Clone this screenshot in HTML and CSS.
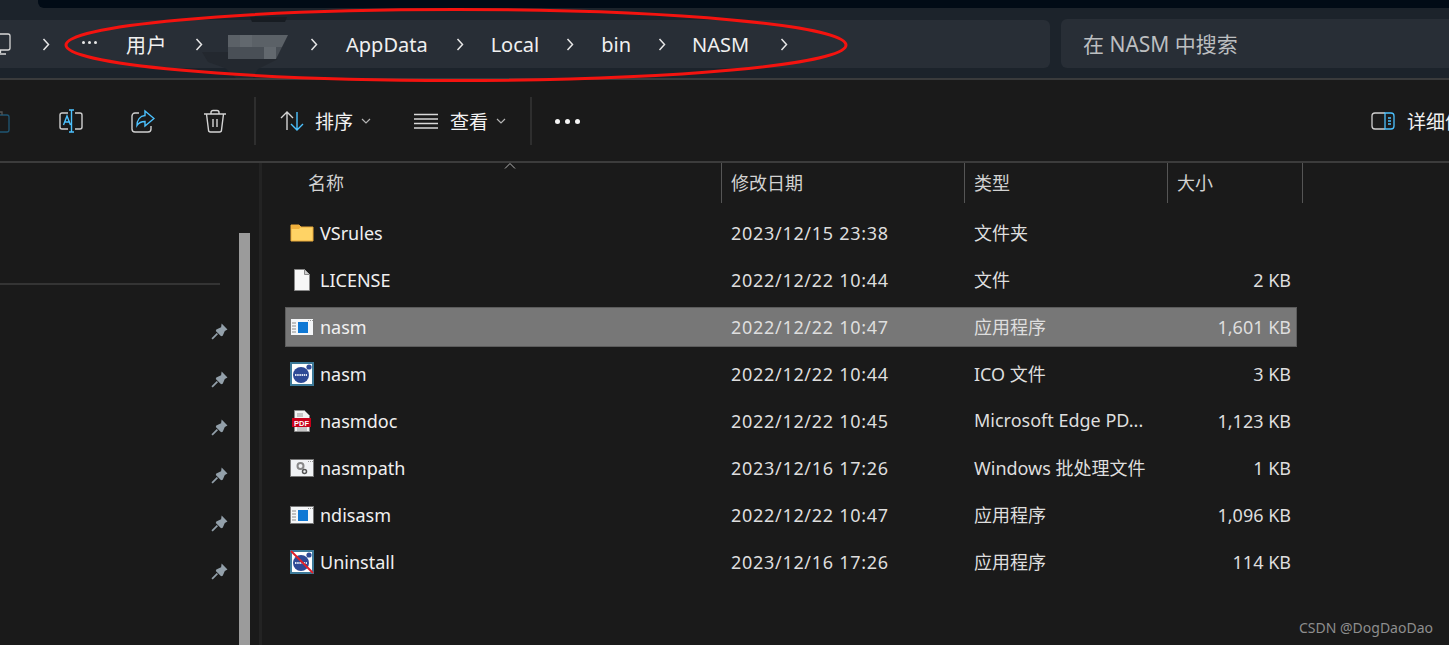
FILE: index.html
```html
<!DOCTYPE html>
<html lang="zh-CN">
<head>
    <meta charset="UTF-8">
    <title>NASM</title>
    <link rel="stylesheet" href="styles.css">
</head>
<body>
<svg class="defs" width="0" height="0">
    <symbol id="exe" viewBox="0 0 24 18">
        <rect x="0.5" y="0.5" width="23" height="17" fill="#f4f6f8" stroke="#777"/>
        <path d="M2 5h4M2 8h4M2 11h4M2 14h4" stroke="#8a8a8a"/>
        <path d="M18 2.5h1M20 2.5h1M22 2.5h1" stroke="#999"/>
        <rect x="8" y="4" width="10" height="11" fill="#0f78d4"/>
    </symbol>
    <symbol id="logo" viewBox="0 0 24 24">
        <rect x="1" y="1" width="22" height="22" fill="#fff" stroke="#3d7a99" stroke-width="2"/>
        <circle cx="11" cy="13" r="8" fill="#2f4a96"/>
        <circle cx="19" cy="5" r="2.6" fill="#2f4a96"/>
        <path d="M5 13h12" stroke="#dfe4f2" stroke-width="2" stroke-dasharray="1.5 0.7"/>
    </symbol>
    <symbol id="chevron" viewBox="0 0 8 13">
        <path d="M1.500 1l5 5.500-5 5.500" fill="none" stroke="#e6e6e6" stroke-width="1.500"/>
    </symbol>
    <symbol id="pushpin" viewBox="0 0 16 16">
        <path d="M10 0.500l5.500 5.500-2.500 1.500-2 4.500-1.500 0.500-5-5 0.500-1.500 4.500-2z" fill="#93a0aa"/>
        <path d="M6 10l-5 5" stroke="#93a0aa" stroke-width="1.600"/>
    </symbol>
</svg>

<div class="window">
    <div class="titlebar"><div class="titlebar-tab"></div></div>

    <div class="addressrow">
        <div class="crumbs">
            <svg class="pc-icon" width="22" height="24" viewBox="0 0 22 24" fill="none" stroke="#d8d8d8" stroke-width="1.3">
                <rect x="1" y="2" width="19" height="16" rx="2"/>
                <path d="M10.500 18v3M5 22h11"/>
            </svg>
            <svg class="chev first-chev" width="8" height="13"><use href="#chevron"/></svg>
            <div class="crumb-more"><i></i><i></i><i></i></div>
            <span class="crumb crumb-cjk">用户</span>
            <svg class="chev" width="8" height="13"><use href="#chevron"/></svg>
            <svg class="blurred" width="60" height="24" viewBox="0 0 60 24">
                <path d="M-26 17h26v7h50l-20 10-5 9h-17l-11-10-17-6z" fill="#23282f"/>
                <path d="M22-18h37l-2 5h-33z" fill="#171c22"/>
                <path d="M0 0h60l-6 12h-54z" fill="#5b6167"/>
                <path d="M0 12h54l-6 12h-48z" fill="#494f56"/>
                <path d="M12 0h12v12h-12zM36 12h12v12h-12z" fill="#62686e"/>
            </svg>
            <svg class="chev chev-after-blur" width="8" height="13"><use href="#chevron"/></svg>
            <span class="crumb">AppData</span>
            <svg class="chev" width="8" height="13"><use href="#chevron"/></svg>
            <span class="crumb">Local</span>
            <svg class="chev chev-local" width="8" height="13"><use href="#chevron"/></svg>
            <span class="crumb">bin</span>
            <svg class="chev chev-bin" width="8" height="13"><use href="#chevron"/></svg>
            <span class="crumb">NASM</span>
            <svg class="chev chev-last" width="8" height="13"><use href="#chevron"/></svg>
        </div>
        <div class="search">在 NASM 中搜索</div>
    </div>

    <div class="toolbar">
        <svg class="tool tool-paste" width="24" height="24" viewBox="0 0 24 24" fill="none" stroke-width="1.300">
            <rect x="1" y="6" width="22" height="17" rx="2" stroke="#1f5673"/>
            <path d="M8 6V3h8v3" stroke="#555"/>
        </svg>
        <svg class="tool" width="24" height="24" viewBox="0 0 24 24" fill="none" stroke-width="1.400">
            <path d="M9 4H3a2 2 0 0 0-2 2v12a2 2 0 0 0 2 2h6M16 4h5a2 2 0 0 1 2 2v12a2 2 0 0 1-2 2h-5" stroke="#cfcfcf"/>
            <path d="M12.500 1v22M10 1h5M10 23h5M4.500 16l3.500-9 3.500 9M6 13h5" stroke="#4cc2ff"/>
        </svg>
        <svg class="tool" width="24" height="24" viewBox="0 0 24 24" fill="none" stroke-width="1.400">
            <path d="M8 4H4a3 3 0 0 0-3 3v13a3 3 0 0 0 3 3h13a3 3 0 0 0 3-3v-3" stroke="#cfcfcf"/>
            <path d="M14 2l9 7.500-9 7.500v-4.500c-4 0-6.500 1.500-8 4 0-5.500 3-9.500 8-10z" stroke="#4cc2ff"/>
        </svg>
        <svg class="tool" width="24" height="24" viewBox="0 0 24 24" fill="none" stroke="#d4d4d4" stroke-width="1.400">
            <path d="M1 5h22M8 5V3.500a2 2 0 0 1 2-2h4a2 2 0 0 1 2 2V5M3.500 5l2 16a2 2 0 0 0 2 2h9a2 2 0 0 0 2-2l2-16M10 10v8M14 10v8"/>
        </svg>
        <div class="tool-sep"></div>
        <svg class="sort-icon" width="24" height="20" viewBox="0 0 24 20" fill="none" stroke-width="1.400">
            <path d="M7 19V1M1 7l6-6 6 6" stroke="#d4d4d4"/>
            <path d="M17 1v18M11 13l6 6 6-6" stroke="#4cc2ff"/>
        </svg>
        <span class="tool-label">排序</span>
        <svg class="caret" width="10" height="6" viewBox="0 0 10 6"><path d="M1 1l4 4 4-4" fill="none" stroke="#b4b4b4" stroke-width="1.200"/></svg>
        <svg class="view-icon" width="24" height="16" viewBox="0 0 24 16" fill="none" stroke="#d8d8d8" stroke-width="1.300">
            <path d="M0 1.500h24M0 6h24M0 10.500h24M0 15h24"/>
        </svg>
        <span class="tool-label">查看</span>
        <svg class="caret" width="10" height="6" viewBox="0 0 10 6"><path d="M1 1l4 4 4-4" fill="none" stroke="#b4b4b4" stroke-width="1.200"/></svg>
        <div class="tool-sep sep-second"></div>
        <div class="dots"><i></i><i></i><i></i></div>
        <svg class="detail-icon" width="24" height="18" viewBox="0 0 24 18" fill="none" stroke-width="1.300">
            <path d="M14 1H4a3 3 0 0 0-3 3v10a3 3 0 0 0 3 3h10" stroke="#cfcfcf"/>
            <path d="M14 1h6a3 3 0 0 1 3 3v10a3 3 0 0 1-3 3h-6zM17 6h3M17 9h3M17 12h3" stroke="#4cc2ff"/>
        </svg>
        <span class="tool-label">详细信息</span>
    </div>

    <div class="body">
        <aside class="sidebar">
            <div class="nav">
                <div class="nav-line"></div>
                <div class="pins">
                    <svg class="pin" width="17" height="17"><use href="#pushpin"/></svg>
                    <svg class="pin" width="17" height="17"><use href="#pushpin"/></svg>
                    <svg class="pin" width="17" height="17"><use href="#pushpin"/></svg>
                    <svg class="pin" width="17" height="17"><use href="#pushpin"/></svg>
                    <svg class="pin" width="17" height="17"><use href="#pushpin"/></svg>
                    <svg class="pin" width="17" height="17"><use href="#pushpin"/></svg>
                </div>
            </div>
            <div class="scrollbar"></div>
        </aside>

        <main class="list">
            <div class="list-head">
                <div class="col col-name">名称<svg class="sort-caret" width="12" height="6" viewBox="0 0 12 6"><path d="M1 5.500l5-5 5 5" fill="none" stroke="#b0b0b0"/></svg></div>
                <div class="col">修改日期</div>
                <div class="col">类型</div>
                <div class="col">大小</div>
            </div>

            <div class="row">
                <div class="cell-name">
                    <svg class="file-icon" width="24" height="18" viewBox="0 0 24 18"><path d="M1 1h8l2 2h12v14H1z" fill="#ffd365" stroke="#e8a93a"/><path d="M1 1h8l2 2-2 2H1z" fill="#f0b03c"/></svg>
                    VSrules
                </div>
                <div class="date">2023/12/15 23:38</div><div class="type">文件夹</div><div class="size"></div>
            </div>
            <div class="row">
                <div class="cell-name">
                    <svg class="file-icon" width="24" height="22" viewBox="0 0 24 22"><path d="M4.500 0.500h10l5 5v16h-15z" fill="#f7f7f7" stroke="#888"/><path d="M14.500 0.500v5h5" fill="#ccc" stroke="#888"/></svg>
                    LICENSE
                </div>
                <div class="date">2022/12/22 10:44</div><div class="type">文件</div><div class="size">2 KB</div>
            </div>
            <div class="row row-selected">
                <div class="cell-name"><svg class="file-icon" width="24" height="18"><use href="#exe"/></svg>nasm</div>
                <div class="date">2022/12/22 10:47</div><div class="type">应用程序</div><div class="size">1,601 KB</div>
            </div>
            <div class="row">
                <div class="cell-name"><svg class="file-icon" width="24" height="24"><use href="#logo"/></svg>nasm</div>
                <div class="date">2022/12/22 10:44</div><div class="type">ICO 文件</div><div class="size">3 KB</div>
            </div>
            <div class="row">
                <div class="cell-name">
                    <svg class="file-icon" width="24" height="22" viewBox="0 0 24 22">
                        <path d="M4.500 0.500h10l5 5v16h-15z" fill="#f2f2f2" stroke="#888"/>
                        <path d="M7 4h6M7 6h6M7 18h10M7 20h10" stroke="#999"/>
                        <rect x="2" y="8" width="19" height="9" fill="#c8001a"/>
                        <text x="11.500" y="15.500" class="pdf-text">PDF</text>
                    </svg>
                    nasmdoc
                </div>
                <div class="date">2022/12/22 10:45</div><div class="type">Microsoft Edge PD...</div><div class="size">1,123 KB</div>
            </div>
            <div class="row">
                <div class="cell-name">
                    <svg class="file-icon" width="24" height="18" viewBox="0 0 24 18">
                        <rect x="0.500" y="0.500" width="23" height="17" fill="#f0f2f4" stroke="#777"/>
                        <path d="M18 2.500h1M20 2.500h1M22 2.500h1" stroke="#999"/>
                        <circle cx="10.500" cy="7" r="3" fill="none" stroke="#888" stroke-width="2"/>
                        <circle cx="14.500" cy="12.500" r="2" fill="none" stroke="#555" stroke-width="1.500"/>
                    </svg>
                    nasmpath
                </div>
                <div class="date">2023/12/16 17:26</div><div class="type">Windows 批处理文件</div><div class="size">1 KB</div>
            </div>
            <div class="row">
                <div class="cell-name"><svg class="file-icon" width="24" height="18"><use href="#exe"/></svg>ndisasm</div>
                <div class="date">2022/12/22 10:47</div><div class="type">应用程序</div><div class="size">1,096 KB</div>
            </div>
            <div class="row">
                <div class="cell-name">
                    <svg class="file-icon" width="24" height="24" viewBox="0 0 24 24">
                        <use href="#logo"/>
                        <path d="M1 1l22 22" stroke="#e0202a" stroke-width="2"/>
                    </svg>
                    Uninstall
                </div>
                <div class="date">2023/12/16 17:26</div><div class="type">应用程序</div><div class="size">114 KB</div>
            </div>
        </main>
    </div>

    <svg class="red-mark" width="790" height="78" viewBox="0 0 790 78">
        <ellipse cx="395" cy="39" rx="390" ry="35.500" fill="none" stroke="#f4130f" stroke-width="3"/>
    </svg>
    <div class="watermark">CSDN @DogDaoDao</div>
</div>
</body>
</html>
```
FILE: styles.css
```css
* {
    box-sizing: border-box;
}
html, body {
    margin: 0;
    height: 100%;
    overflow: hidden;
}
body {
    background: #1a1a1a;
    font-family: "Noto Sans", "Noto Sans CJK SC", sans-serif;
    color: #e4e4e4;
}
.defs {
    position: absolute;
}
.window {
    position: relative;
    width: 1449px;
    height: 645px;
    overflow: hidden;
    display: flex;
    flex-direction: column;
}

/* top strip */
.titlebar {
    height: 8px;
    background: #1c232b;
    padding-left: 38px;
}
.titlebar-tab {
    height: 8px;
    background: #010b16;
    border-bottom-left-radius: 6px;
}

/* address row */
.addressrow {
    height: 72px;
    padding-top: 12px;
    background: #1c232b;
    border-bottom: 2px solid #3a3b3c;
    display: flex;
    align-items: flex-start;
}
.crumbs {
    flex: none;
    width: 1050px;
    height: 48px;
    background: #282e36;
    border-radius: 0 6px 6px 0;
    display: flex;
    align-items: center;
    font-size: 20px;
    color: #f0f0f0;
    white-space: nowrap;
}
.pc-icon {
    margin-left: -10px;
    flex: none;
}
.chev {
    flex: none;
    margin: 0 27px 0 28px;
}
.first-chev {
    margin: 0 0 0 30px;
}
.chev-after-blur {
    margin: 0 28px 0 23px;
}
.chev-local {
    margin: 0 27px;
}
.chev-bin {
    margin: 0 26px 0 27px;
}
.chev-last {
    margin-left: 31px;
}
.crumb-cjk {
    letter-spacing: 0.5px;
}
.crumb-more {
    flex: none;
    display: flex;
    gap: 3px;
    margin-left: 32px;
    margin-right: 29px;
    position: relative;
    top: -2px;
}
.crumb-more i {
    width: 3px;
    height: 3px;
    border-radius: 50%;
    background: #e8e8e8;
}
.blurred {
    flex: none;
    overflow: visible;
    margin: 6px -1px 0 -2px;
}
.search {
    flex: none;
    margin-left: 11px;
    margin-top: -1px;
    width: 400px;
    height: 49px;
    padding-left: 22px;
    background: #282e36;
    border-radius: 6px;
    font-size: 21px;
    line-height: 50px;
    color: #bcbec0;
}

/* toolbar */
.toolbar {
    height: 83px;
    border-bottom: 2px solid #3c3c3c;
    background: #1a1a1a;
    display: flex;
    align-items: center;
    font-size: 19px;
    white-space: nowrap;
}
.tool {
    flex: none;
    margin-right: 48px;
}
.tool-paste {
    margin-left: -14px;
    margin-right: 49px;
}
.tool-sep {
    flex: none;
    width: 2px;
    height: 48px;
    background: #2e2e2e;
    margin-left: -21px;
}
.sep-second {
    margin-left: 24px;
}
.sort-icon {
    flex: none;
    margin-left: 24px;
    margin-right: 11px;
}
.tool-label {
    color: #f2f2f2;
    flex: none;
}
.caret {
    flex: none;
    margin-left: 8px;
}
.view-icon {
    flex: none;
    margin-left: 43px;
    margin-right: 12px;
}
.dots {
    display: flex;
    gap: 5px;
    margin-top: 2px;
    margin-left: 23px;
    margin-right: 791px;
    flex: none;
}
.dots i {
    width: 5px;
    height: 5px;
    border-radius: 50%;
    background: #f4f4f4;
}
.detail-icon {
    flex: none;
    margin-right: 12px;
}

/* sidebar + list */
.body {
    flex: 1;
    display: flex;
    min-height: 0;
}
.sidebar {
    flex: none;
    width: 262px;
    display: flex;
    border-right: 3px solid #232323;
}
.nav {
    width: 239px;
    padding-top: 120px;
}
.nav-line {
    width: 220px;
    height: 2px;
    background: #343434;
}
.pins {
    display: flex;
    flex-direction: column;
    align-items: flex-end;
    gap: 31px;
    margin-top: 38px;
    padding-right: 11px;
}
.scrollbar {
    width: 11px;
    margin-top: 70px;
    background: #9b9b9b;
}
.list {
    flex: 1;
    min-width: 0;
    padding-left: 23px;
    font-size: 18px;
}
.list-head {
    display: grid;
    grid-template-columns: 437px 243px 203px 135px;
    height: 40px;
    margin-bottom: 10px;
    color: #d2d2d2;
}
.col {
    position: relative;
    padding-left: 9px;
    line-height: 40px;
    border-right: 1px solid #555;
    font-size: 18px;
}
.col-name {
    padding-left: 23px;
}
.sort-caret {
    position: absolute;
    left: 219px;
    top: 0;
}
.row {
    display: grid;
    grid-template-columns: 436px 244px 203px 129px;
    align-items: center;
    height: 40px;
    margin-bottom: 7px;
    width: 1012px;
    color: #dedede;
    white-space: nowrap;
}
.type {
    padding: 0 0 2px 9px;
}
.date {
    padding-left: 10px;
    letter-spacing: 0.7px;
}
.size {
    padding-right: 6px;
    text-align: right;
}
.cell-name {
    display: flex;
    align-items: center;
    color: #f0f0f0;
}
.file-icon {
    flex: none;
    margin-left: 5px;
    margin-right: 6px;
}
.row-selected {
    background: #777;
    outline: 1px solid #5c5c5c;
    outline-offset: -1px;
}
.pdf-text {
    font-family: "Liberation Sans", sans-serif;
    font-size: 7.500px;
    font-weight: 700;
    fill: #fff;
    text-anchor: middle;
}

/* things drawn over the screenshot */
.red-mark {
    position: absolute;
    left: 61px;
    top: 6px;
}
.watermark {
    position: absolute;
    right: 16px;
    top: 618px;
    font-size: 14px;
    color: #8e8e8e;
}
```
